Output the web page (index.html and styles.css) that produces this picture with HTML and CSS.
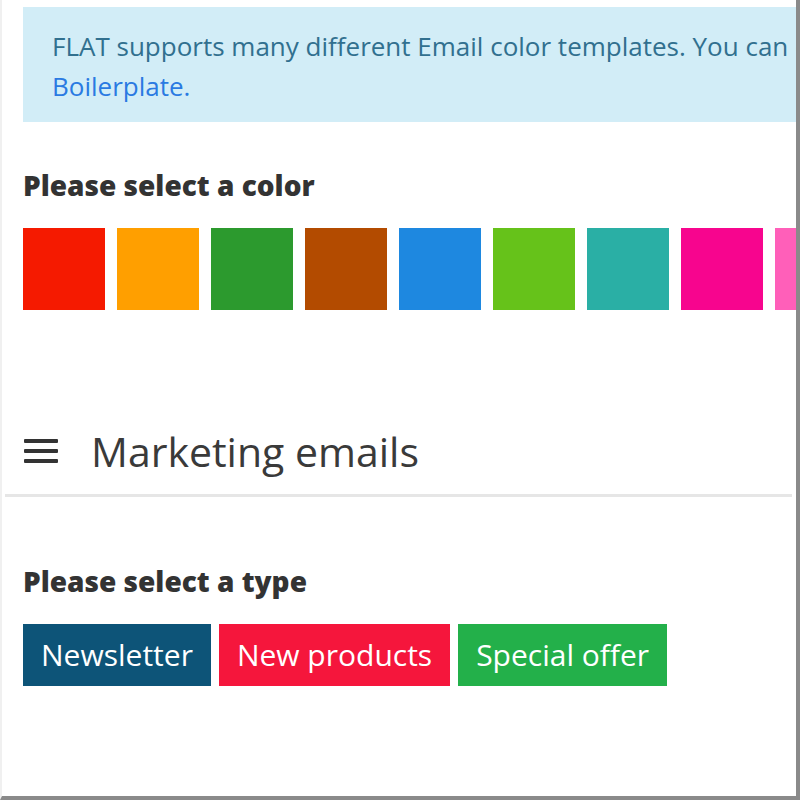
FILE: index.html
```html
<!DOCTYPE html>
<html>
<head>
<meta charset="utf-8">
<link rel="stylesheet" href="styles.css">
</head>
<body>
<div class="frame">
  <div class="content">
    <div class="alert">
      <p><span class="line">FLAT supports many different Email color templates. You can choose the color you want for your email and download the</span><br><a href="#">Boilerplate.</a></p>
    </div>
    <h3 class="label">Please select a color</h3>
    <div class="swatches">
      <span class="sw red"></span>
      <span class="sw orange"></span>
      <span class="sw green"></span>
      <span class="sw brown"></span>
      <span class="sw blue"></span>
      <span class="sw lime"></span>
      <span class="sw teal"></span>
      <span class="sw pink"></span>
      <span class="sw lpink"></span>
    </div>
  </div>
  <div class="section-head">
    <svg class="burger" width="34" height="26" viewBox="0 0 34 26"><rect x="0" y="1" width="34" height="4" rx="1" fill="#333"/><rect x="0" y="11" width="34" height="4" rx="1" fill="#333"/><rect x="0" y="21" width="34" height="4" rx="1" fill="#333"/></svg>
    <h2 class="title">Marketing emails</h2>
  </div>
  <div class="content">
    <h3 class="label type-label">Please select a type</h3>
    <div class="types">
      <span class="btn navy">Newsletter</span>
      <span class="btn red2">New products</span>
      <span class="btn green2">Special offer</span>
    </div>
  </div>
</div>
</body>
</html>
```

FILE: styles.css
```css
html, body {
  margin: 0;
  padding: 0;
  background: #fff;
}
.frame {
  width: 800px;
  height: 800px;
  box-sizing: border-box;
  border-left: 2px solid #f0f0f0;
  border-right: 4px solid #8a8a8a;
  border-bottom: 4px solid #8a8a8a;
  overflow: hidden;
  font-family: "Open Sans", "DejaVu Sans", sans-serif;
  color: #333;
}
.content {
  padding-left: 21px;
}
.alert {
  margin-top: 7px;
  width: 900px;
  background: #d2edf7;
  padding: 19px 29px 0;
  box-sizing: border-box;
  height: 115px;
}
.alert p {
  margin: 0;
  font-size: 26px;
  line-height: 40px;
  color: #31708f;
  white-space: nowrap;
}
.alert a {
  color: #2a7ae2;
  text-decoration: none;
}
.label {
  margin: 0;
  font-size: 28px;
  font-weight: 800;
  line-height: 34px;
  color: #333;
  padding-top: 46px;
}
.swatches {
  display: flex;
  gap: 12px;
  margin-top: 26px;
}
.sw {
  flex: 0 0 82px;
  height: 82px;
}
.red { background: #f51a00; }
.orange { background: #ff9f00; }
.green { background: #2c9a2e; }
.brown { background: #b34b00; }
.blue { background: #1e88e0; }
.lime { background: #66c21a; }
.teal { background: #2aafa5; }
.pink { background: #f7058e; }
.lpink { background: #ff5fb9; }

.section-head {
  display: flex;
  align-items: center;
  gap: 33px;
  margin: 116px 4px 0 3px;
  padding: 0 0 18px 19px;
  border-bottom: 3px solid #e6e6e6;
}
.burger {
  display: block;
  flex: 0 0 auto;
}
.title {
  margin: 0;
  font-size: 41px;
  font-weight: 400;
  line-height: 50px;
  color: #3a3a3a;
}
.type-label {
  padding-top: 67px;
}
.types {
  display: flex;
  gap: 8px;
  margin-top: 26px;
}
.btn {
  display: block;
  height: 62px;
  line-height: 62px;
  padding: 0 18px;
  color: #fff;
  font-size: 30px;
}
.navy { background: #0d5478; }
.red2 { background: #f5163c; }
.green2 { background: #23b04a; }
```
